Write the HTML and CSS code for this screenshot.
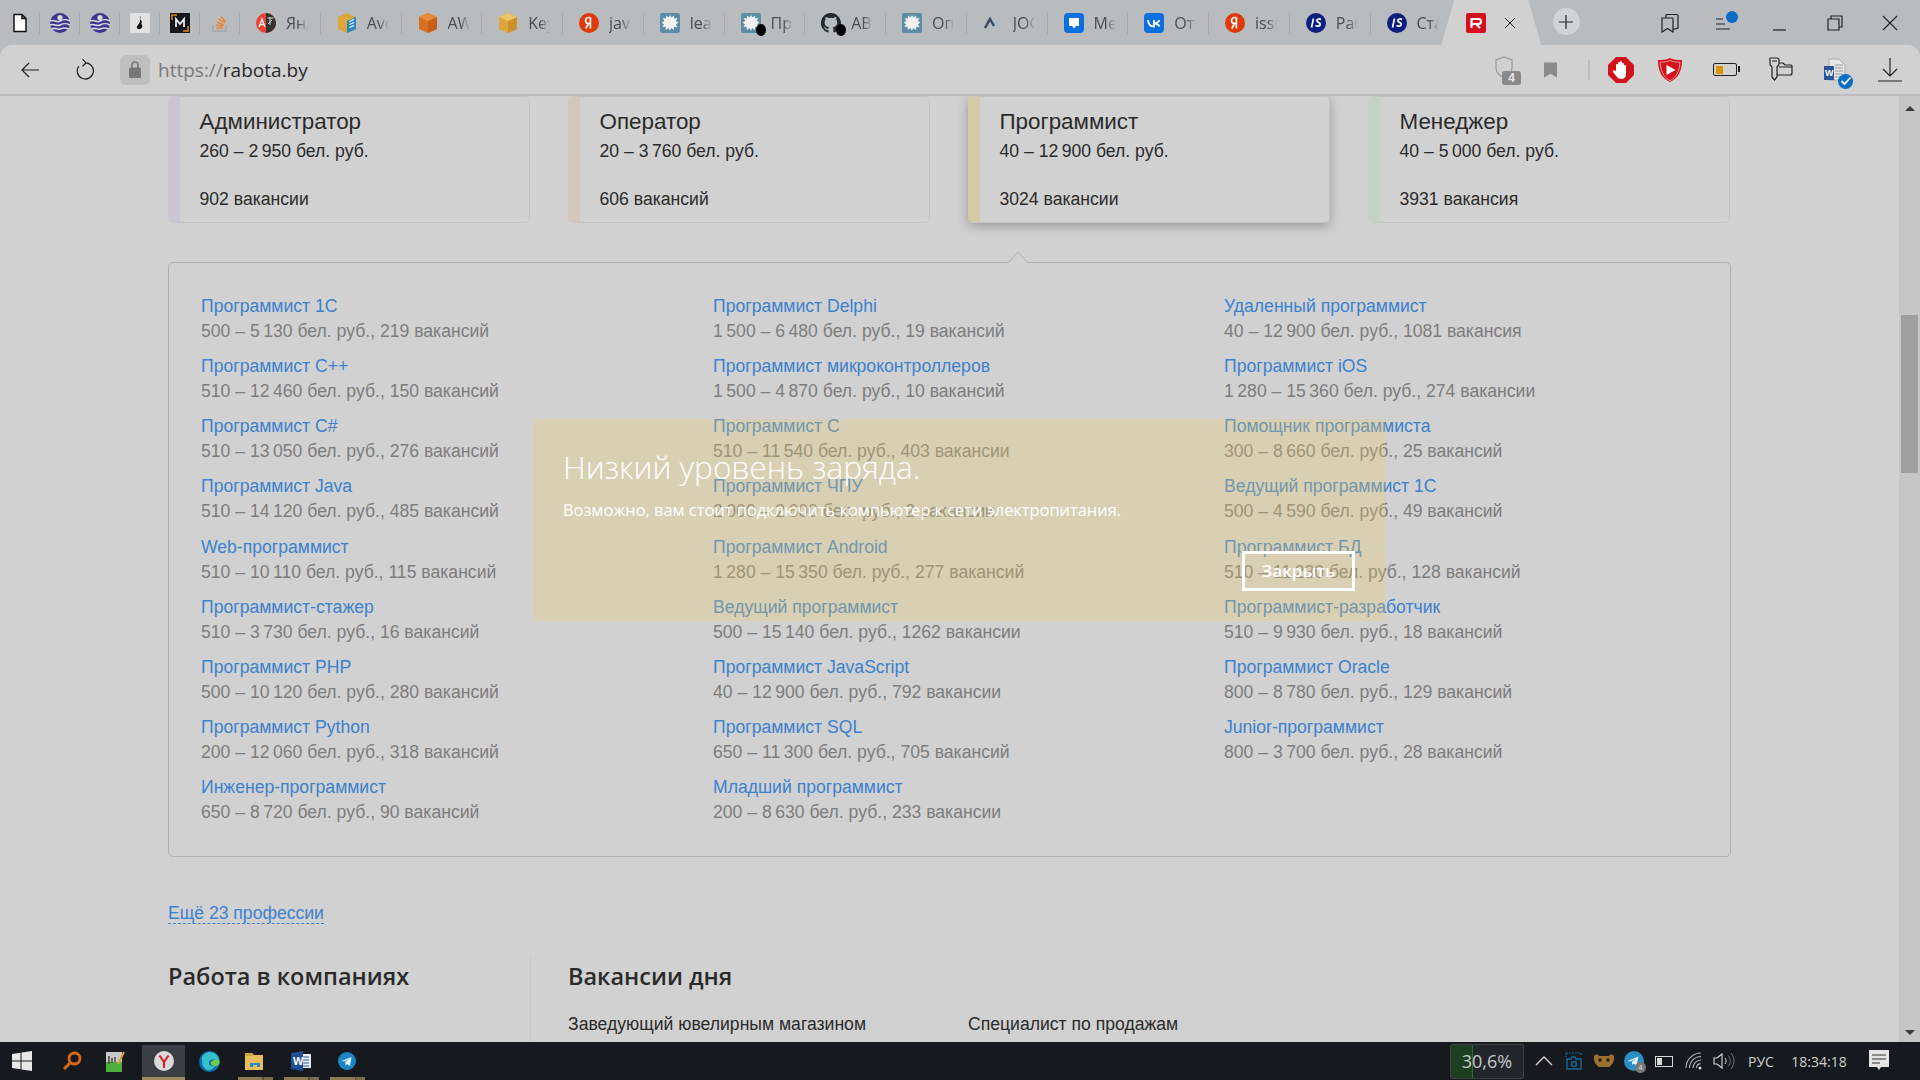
FILE: index.html
```html
<!DOCTYPE html>
<html lang="ru">
<head>
<meta charset="utf-8">
<title>rabota.by</title>
<link rel="stylesheet" href="styles.css">
</head>
<body>
<svg class="defs" width="0" height="0">
  <defs>
    <symbol id="bug" viewBox="0 0 20 20"><rect width="20" height="20" rx="2" fill="#5b8ea6"/><path d="M10 2l1.5 2.5L14 2.5l.2 3 3.3-.5-1.6 3 2.6 1.5-2.6 1.7 1.6 3-3.3-.4-.4 3.2-2.5-2-1.4 2.7-1.5-2.7-2.6 2-.2-3.2-3.2.3 1.6-2.8L1.6 9.5l2.7-1.4-1.6-3 3.2.4.3-3 2.4 2z" fill="#f2f2f2"/></symbol>
    <symbol id="wave" viewBox="0 0 20 20"><circle cx="10" cy="10" r="10" fill="#3f3590"/><circle cx="10" cy="4.5" r="2.6" fill="#d7d7dc"/><path d="M0 8c4-2 6 2 10 0s6-2 10 0M0 12c4-2 6 2 10 0s6-2 10 0M2 16c3-2 5 1 8 0s5-2 8 0" fill="none" stroke="#d7d7dc" stroke-width="1.6"/></symbol>
    <symbol id="box" viewBox="0 0 20 20"><path d="M10 0l9 4v12l-9 4-9-4V4z" fill="#dca73a"/><path d="M10 8l9-4v12l-9 4z" fill="#c9912a"/><path d="M10 8L1 4l9-4 9 4z" fill="#ecc469"/></symbol>
    <symbol id="ya" viewBox="0 0 20 20"><circle cx="10" cy="10" r="10" fill="#e0390b"/><path d="M11.4 4.5v11M11.4 10.5H9.6a3 3 0 0 1 0-6h1.8M9.5 10.5L6.8 15.5" fill="none" stroke="#fff" stroke-width="1.7"/></symbol>
    <symbol id="js" viewBox="0 0 20 20"><circle cx="10" cy="10" r="10" fill="#0b1f80"/><path d="M7.5 5.5L5.5 14.5M15 6.6c-1.2-1-4-1-4.2 1 0 2.2 3.6 1.4 3.4 3.8-.2 2-3.3 2.2-4.7 1" fill="none" stroke="#fff" stroke-width="1.7"/></symbol>
    <symbol id="x" viewBox="0 0 12 12"><path d="M1 1l10 10M11 1L1 11" stroke="currentColor" stroke-width="1" fill="none"/></symbol>
  </defs>
</svg>

<div class="screen">
  <header class="tabstrip">
    <div class="pin"><svg class="ico" viewBox="0 0 20 20"><path d="M4 1.5h8l4 4v13H4zM12 1.5v4h4" fill="#fff" stroke="#111" stroke-width="1.5"/></svg></div>
    <div class="pin"><svg class="ico"><use href="#wave"/></svg></div>
    <div class="pin"><svg class="ico"><use href="#wave"/></svg></div>
    <div class="pin"><svg class="ico" viewBox="0 0 20 20"><rect width="20" height="20" fill="#e2e2e2"/><path d="M11 3c-3 3 3 5 0 8 3 1 1 6-3 5-2-1-1-3 0-4 2-2 2-4 3-9z" fill="#111"/></svg></div>
    <div class="pin"><svg class="ico" viewBox="0 0 20 20"><rect width="20" height="20" fill="#15171b"/><path d="M2 7V2h5M18 13v5h-5" fill="none" stroke="#e8851c" stroke-width="1.5"/><path d="M6 14V6l4 5 4-5v8" fill="none" stroke="#eee" stroke-width="1.8"/></svg></div>
    <div class="pin"><svg class="ico" viewBox="0 0 20 20"><path d="M3 12v6h13v-6" fill="none" stroke="#a8a8a8" stroke-width="1.5"/><path d="M6 15h7M6.2 12l7 1.2M7 9l6.7 3M8.7 6l6 4.2M11 3.5l4.5 5.5" stroke="#e58a3c" stroke-width="1.6"/></svg></div>

    <div class="tab"><svg class="ico" viewBox="0 0 20 20"><circle cx="10" cy="10" r="10" fill="#ea4335"/><path d="M10 0a10 10 0 0 1 0 20z" fill="#333"/><path d="M3 14l3-8 3 8M4 11.5h4" stroke="#fff" fill="none" stroke-width="1.3"/><path d="M11.5 5h6M14 4v8M12 11l4-4" stroke="#ddd" fill="none"/></svg><span class="tab-name">Янд</span></div>
    <div class="tab"><svg class="ico" viewBox="0 0 20 20"><path d="M10 0l9 4v12l-9 4-9-4V4z" fill="#dca73a"/><path d="M10 8l9-4v12l-9 4z" fill="#2a87c4"/><path d="M12.5 8.5l4.5-2M12.5 11.5l4.5-2M12.5 14.5l4.5-2" stroke="#fff" stroke-width="1.2"/></svg><span class="tab-name">Avo</span></div>
    <div class="tab"><svg class="ico" viewBox="0 0 20 20"><path d="M10 0l9 4v12l-9 4-9-4V4z" fill="#d9701f"/><path d="M10 8l9-4v12l-9 4z" fill="#c75f14"/><path d="M10 8L1 4l9-4 9 4z" fill="#e88c3b"/></svg><span class="tab-name">AW</span></div>
    <div class="tab"><svg class="ico"><use href="#box"/></svg><span class="tab-name">Key</span></div>
    <div class="tab"><svg class="ico"><use href="#ya"/></svg><span class="tab-name">java</span></div>
    <div class="tab"><svg class="ico"><use href="#bug"/></svg><span class="tab-name">lea</span></div>
    <div class="tab"><span class="ico-wrap"><svg class="ico"><use href="#bug"/></svg><i class="dot"></i></span><span class="tab-name">Пр</span></div>
    <div class="tab"><span class="ico-wrap"><svg class="ico" viewBox="0 0 20 20"><path d="M10 0a10 10 0 0 0-3.2 19.5c.5.1.7-.2.7-.5v-2c-2.8.6-3.4-1.2-3.4-1.2-.5-1.2-1.1-1.5-1.1-1.5-.9-.6.1-.6.1-.6 1 .1 1.5 1 1.5 1 .9 1.5 2.3 1.1 2.9.8.1-.6.3-1.1.6-1.3-2.2-.3-4.5-1.1-4.5-4.9 0-1.1.4-2 1-2.7-.1-.3-.4-1.3.1-2.6 0 0 .8-.3 2.7 1a9.500 9.500 0 0 1 5 0c1.900-1.300 2.700-1 2.700-1 .5 1.300.2 2.300.1 2.600.6.700 1 1.600 1 2.700 0 3.800-2.300 4.600-4.500 4.900.4.300.7.900.7 1.900V19c0 .3.2.6.7.5A10 10 0 0 0 10 0z" fill="#24292e"/></svg><i class="dot"></i></span><span class="tab-name">АВ</span></div>
    <div class="tab"><svg class="ico"><use href="#bug"/></svg><span class="tab-name">Оп</span></div>
    <div class="tab"><svg class="ico" viewBox="0 0 20 20"><path d="M2 15l5-9 3.5 6 2-5 5 8" fill="none" stroke="#a9bed6" stroke-width="2.5"/><path d="M2 15l5-9 4 7" fill="none" stroke="#3a4a5a" stroke-width="2.5"/></svg><span class="tab-name">JOC</span></div>
    <div class="tab"><svg class="ico" viewBox="0 0 20 20"><rect width="20" height="20" rx="4" fill="#0b6fe0"/><path d="M5 5h10v8h-3l-2 2.5L8 13H5z" fill="#fff"/></svg><span class="tab-name">Ме</span></div>
    <div class="tab"><svg class="ico" viewBox="0 0 20 20"><rect width="20" height="20" rx="4" fill="#0b6fe0"/><path d="M4 7c.2 4 2.5 6.5 6 6.5V7M15.5 7c-.6 1.8-2.5 3-5.5 3.5 3 .3 4.8 1.3 5.5 3" fill="none" stroke="#fff" stroke-width="1.8"/></svg><span class="tab-name">Отс</span></div>
    <div class="tab"><svg class="ico"><use href="#ya"/></svg><span class="tab-name">issu</span></div>
    <div class="tab"><svg class="ico"><use href="#js"/></svg><span class="tab-name">Раб</span></div>
    <div class="tab tab-last"><svg class="ico"><use href="#js"/></svg><span class="tab-name">Ста</span></div>
    <div class="tab-active">
      <svg class="ico" viewBox="0 0 20 20"><rect width="20" height="20" rx="2" fill="#d4101f"/><path d="M5.5 15V6h7a2.3 2.3 0 0 1 0 5h-7M10 11l4 4" fill="none" stroke="#fff" stroke-width="2.2"/></svg>
      <svg class="tab-close"><use href="#x"/></svg>
    </div>
    <div class="newtab"><svg width="14" height="14" viewBox="0 0 14 14"><path d="M7 0v14M0 7h14" stroke="#222" stroke-width="1.2"/></svg></div>
    <div class="winbtns">
      <span class="win-slot"><svg class="wb" viewBox="0 0 20 20"><path d="M2 5h10a1 1 0 0 1 1 1v13l-5.500-3.500L2 19zM6 5V2.500a1 1 0 0 1 1-1h10a1 1 0 0 1 1 1V15l-5 1.500" fill="none" stroke="#222" stroke-width="1.2"/></svg></span>
      <span class="win-slot"><span class="wb-list"><svg class="wb" viewBox="0 0 20 20"><path d="M1 6h7M1 11h9M1 16h14" stroke="#222" stroke-width="1.1"/></svg><i class="bluedot"></i></span></span>
      <span class="win-slot"><svg class="wb" viewBox="0 0 20 20"><path d="M3 17h13" stroke="#222" stroke-width="1.2"/></svg></span>
      <span class="win-slot"><svg class="wb" viewBox="0 0 20 20"><path d="M6 6V3h11v11h-3M3 6h11v11H3z" fill="none" stroke="#222" stroke-width="1.2"/></svg></span>
      <span class="win-slot"><svg class="wb" viewBox="0 0 20 20"><path d="M3 3l14 14M17 3L3 17" stroke="#222" stroke-width="1.1"/></svg></span>
    </div>
  </header>

  <nav class="toolbar">
    <svg class="tool-back" viewBox="0 0 20 20"><path d="M19 10H2M9 3l-7 7 7 7" fill="none" stroke="#222" stroke-width="1.2"/></svg>
    <svg class="tool-reload" viewBox="0 0 20 24"><path d="M11 4.5a8.500 8.500 0 1 1-7 3.500M8 0.500l3.500 4L8 8" fill="none" stroke="#222" stroke-width="1.3"/></svg>
    <div class="lockbox"><svg width="12" height="17" viewBox="0 0 12 17"><path d="M3 7V4a3 3 0 0 1 6 0v3" fill="none" stroke="#777" stroke-width="1.6"/><rect y="6.5" width="12" height="10.5" rx="1.5" fill="#777"/></svg></div>
    <div class="url"><span class="url-proto">https://</span>rabota.by</div>
    <div class="tools">
      <span class="t-shield"><svg width="22" height="26" viewBox="0 0 22 26"><path d="M11 2l8 3v8c0 5-4 8-8 10-4-2-8-5-8-10V5z" fill="none" stroke="#9a9a9a" stroke-width="1.2"/></svg><b class="t-badge">4</b></span>
      <span class="slot slot-mark"><svg class="t-mark" viewBox="0 0 14 16"><path d="M0 0h14v16l-7-4-7 4z" fill="#8a8a8a"/></svg></span>
      <span class="slot slot-sep"><i class="t-sep"></i></span>
      <span class="slot slot-ad"><svg class="t-ic" viewBox="0 0 26 26"><path d="M8 0h10l8 8v10l-8 8H8l-8-8V8z" fill="#d3131c"/><path d="M8 14V8a1 1 0 0 1 2 0V6a1 1 0 0 1 2 0V5a1 1 0 0 1 2 0v2a1 1 0 0 1 2 0v2a1 1 0 0 1 2 0v8c0 3-2 5-5 5-2 0-3-1-4-2l-4-5c-.5-1 .5-2 1.5-1.500z" fill="#fff"/></svg></span>
      <span class="slot"><svg class="t-ic" viewBox="0 0 26 26"><path d="M13 1c4 2 8 2 12 2 0 10-3 18-12 22C4 21 1 13 1 3c4 0 8 0 12-2z" fill="#d3131c"/><path d="M13 3.5c3.500 1.500 6.500 1.600 9.800 1.700-.2 8-3 15-9.800 18.500C6.200 20.200 3.400 13.200 3.200 5.200 6.500 5.100 9.500 5 13 3.500z" fill="none" stroke="#f1b5b5" stroke-width=".8"/><path d="M9.500 8l9 5-9 5z" fill="#fff"/></svg></span>
      <span class="slot"><span class="t-batt"><i class="t-batt-fill"></i></span></span>
      <span class="slot"><svg class="t-ic" viewBox="0 0 26 26"><path d="M3 1h7a2 2 0 0 1 2 2v4c0 2-2 2-2 3v10l-2.500 3L5 20V10c0-1-2-1-2-3V3a2 2 0 0 1 0-2zM5 4h5" fill="none" stroke="#222" stroke-width="1.2"/><path d="M12 6h4l2 2h6a1 1 0 0 1 1 1v7a2 2 0 0 1-2 2H10M12 10h13" fill="none" stroke="#222" stroke-width="1.2"/></svg></span>
      <span class="slot"><span class="t-word"><svg width="30" height="30" viewBox="0 0 30 30"><path d="M9 4h10l6 6v15H9z" fill="#e6e6e6" stroke="#aaa"/><path d="M15 10h8M15 13h8M15 16h8M15 19h8M15 22h8" stroke="#9a9a9a"/><rect x="4" y="11" width="10" height="14" fill="#2a5699"/></svg><b class="t-word-w">W</b><i class="t-check"><svg width="12" height="10" viewBox="0 0 12 10"><path d="M1.5 5l3 3 6-6.500" fill="none" stroke="#fff" stroke-width="1.8"/></svg></i></span></span>
      <span class="slot"><svg class="t-ic" viewBox="0 0 26 26"><path d="M13 1v17M6 12l7 7 7-7M1 24h24" fill="none" stroke="#222" stroke-width="1.2"/></svg></span>
    </div>
  </nav>

  <div class="viewport">
    <main class="page">
      <section class="cards">
        <article class="card card-purple"><h3 class="card-title">Администратор</h3><p class="card-sal">260 – 2&#8201;950 бел. руб.</p><p class="card-count">902 вакансии</p></article>
        <article class="card card-peach"><h3 class="card-title">Оператор</h3><p class="card-sal">20 – 3&#8201;760 бел. руб.</p><p class="card-count">606 вакансий</p></article>
        <article class="card card-yellow card-open"><h3 class="card-title">Программист</h3><p class="card-sal">40 – 12&#8201;900 бел. руб.</p><p class="card-count">3024 вакансии</p></article>
        <article class="card card-green"><h3 class="card-title">Менеджер</h3><p class="card-sal">40 – 5&#8201;000 бел. руб.</p><p class="card-count">3931 вакансия</p></article>
      </section>

      <section class="panel">
        <svg class="panel-arrow" width="24" height="12" viewBox="0 0 24 12"><path d="M0 12h2L12 1l10 11h2" fill="#d1d1d1" stroke="#b0b0b0"/></svg>
        <div class="col">
          <div class="item"><a class="item-link">Программист 1С</a><span class="item-sal">500 – 5&#8201;130 бел. руб., 219 вакансий</span></div>
          <div class="item"><a class="item-link">Программист С++</a><span class="item-sal">510 – 12&#8201;460 бел. руб., 150 вакансий</span></div>
          <div class="item"><a class="item-link">Программист C#</a><span class="item-sal">510 – 13&#8201;050 бел. руб., 276 вакансий</span></div>
          <div class="item"><a class="item-link">Программист Java</a><span class="item-sal">510 – 14&#8201;120 бел. руб., 485 вакансий</span></div>
          <div class="item"><a class="item-link">Web-программист</a><span class="item-sal">510 – 10&#8201;110 бел. руб., 115 вакансий</span></div>
          <div class="item"><a class="item-link">Программист-стажер</a><span class="item-sal">510 – 3&#8201;730 бел. руб., 16 вакансий</span></div>
          <div class="item"><a class="item-link">Программист PHP</a><span class="item-sal">500 – 10&#8201;120 бел. руб., 280 вакансий</span></div>
          <div class="item"><a class="item-link">Программист Python</a><span class="item-sal">200 – 12&#8201;060 бел. руб., 318 вакансий</span></div>
          <div class="item"><a class="item-link">Инженер-программист</a><span class="item-sal">650 – 8&#8201;720 бел. руб., 90 вакансий</span></div>
        </div>
        <div class="col">
          <div class="item"><a class="item-link">Программист Delphi</a><span class="item-sal">1&#8201;500 – 6&#8201;480 бел. руб., 19 вакансий</span></div>
          <div class="item"><a class="item-link">Программист микроконтроллеров</a><span class="item-sal">1&#8201;500 – 4&#8201;870 бел. руб., 10 вакансий</span></div>
          <div class="item"><a class="item-link">Программист C</a><span class="item-sal">510 – 11&#8201;540 бел. руб., 403 вакансии</span></div>
          <div class="item"><a class="item-link">Программист ЧПУ</a><span class="item-sal">2&#8201;000 – 2&#8201;600 бел. руб., 2 вакансии</span></div>
          <div class="item"><a class="item-link">Программист Android</a><span class="item-sal">1&#8201;280 – 15&#8201;350 бел. руб., 277 вакансий</span></div>
          <div class="item"><a class="item-link">Ведущий программист</a><span class="item-sal">500 – 15&#8201;140 бел. руб., 1262 вакансии</span></div>
          <div class="item"><a class="item-link">Программист JavaScript</a><span class="item-sal">40 – 12&#8201;900 бел. руб., 792 вакансии</span></div>
          <div class="item"><a class="item-link">Программист SQL</a><span class="item-sal">650 – 11&#8201;300 бел. руб., 705 вакансий</span></div>
          <div class="item"><a class="item-link">Младший программист</a><span class="item-sal">200 – 8&#8201;630 бел. руб., 233 вакансии</span></div>
        </div>
        <div class="col">
          <div class="item"><a class="item-link">Удаленный программист</a><span class="item-sal">40 – 12&#8201;900 бел. руб., 1081 вакансия</span></div>
          <div class="item"><a class="item-link">Программист iOS</a><span class="item-sal">1&#8201;280 – 15&#8201;360 бел. руб., 274 вакансии</span></div>
          <div class="item"><a class="item-link">Помощник программиста</a><span class="item-sal">300 – 8&#8201;660 бел. руб., 25 вакансий</span></div>
          <div class="item"><a class="item-link">Ведущий программист 1С</a><span class="item-sal">500 – 4&#8201;590 бел. руб., 49 вакансий</span></div>
          <div class="item"><a class="item-link">Программист БД</a><span class="item-sal">510 – 11&#8201;230 бел. руб., 128 вакансий</span></div>
          <div class="item"><a class="item-link">Программист-разработчик</a><span class="item-sal">510 – 9&#8201;930 бел. руб., 18 вакансий</span></div>
          <div class="item"><a class="item-link">Программист Oracle</a><span class="item-sal">800 – 8&#8201;780 бел. руб., 129 вакансий</span></div>
          <div class="item"><a class="item-link">Junior-программист</a><span class="item-sal">800 – 3&#8201;700 бел. руб., 28 вакансий</span></div>
        </div>
      </section>

      <div class="more"><a class="more-link">Ещё 23 профессии</a></div>

      <section class="lower">
        <div class="lower-left"><h2 class="lower-h">Работа в компаниях</h2></div>
        <div class="lower-right">
          <h2 class="lower-h">Вакансии дня</h2>
          <div class="jobs"><span class="job">Заведующий ювелирным магазином</span><span class="job">Специалист по продажам</span></div>
        </div>
      </section>
    </main>
    <aside class="scrollbar">
      <i class="sb-up"></i>
      <i class="sb-thumb"></i>
      <i class="sb-down"></i>
    </aside>

    <div class="toast">
      <div class="toast-title">Низкий уровень заряда.</div>
      <div class="toast-text">Возможно, вам стоит подключить компьютер к сети электропитания.</div>
      <div class="toast-btn">Закрыть</div>
    </div>
  </div>

  <footer class="taskbar">
    <div class="tb-left">
      <span class="tb-slot tb-win"><svg width="20" height="20" viewBox="0 0 20 20"><path d="M0 3l8.5-1.2v7.700H0zM9.500 1.600L20 0v9.500H9.500zM0 10.500h8.500v7.700L0 17zM9.500 10.500H20V20L9.500 18.400z" fill="#e8e8e8"/></svg></span>
      <span class="tb-slot tb-search"><svg width="20" height="20" viewBox="0 0 20 20"><circle cx="12.5" cy="7.5" r="5.5" fill="none" stroke="#d9680f" stroke-width="2.8"/><path d="M8.5 11.5L2 18" stroke="#d9680f" stroke-width="3"/></svg></span>
      <span class="tb-slot tb-notes"><svg width="20" height="21" viewBox="0 0 20 21"><rect y="1" width="16" height="20" fill="#c8c8c8"/><rect y="11" width="16" height="10" fill="#4cae3f"/><path d="M3 5v8M6 7v5M9 6v5" stroke="#333" stroke-width="1.3"/><path d="M18 1l-6 12" stroke="#d9a22b" stroke-width="2"/></svg></span>
      <span class="tb-slot tb-active"><svg width="20" height="20" viewBox="0 0 20 20"><circle cx="10" cy="10" r="10" fill="#d9d9d9"/><path d="M5.5 4.5L10 11l4.500-6.500M10 11v6" fill="none" stroke="#d41c1c" stroke-width="2"/></svg></span>
      <span class="tb-slot"><svg width="21" height="21" viewBox="0 0 21 21"><circle cx="10.5" cy="10.5" r="10.5" fill="#0c6ab0"/><path d="M3 6a9 9 0 0 1 17 5c-4-4-9-3-10 0s3 5 6 4c-2 5-9 6-12 0-1-2-1-6-1-9z" fill="#35c1c9"/><path d="M20 9c1 2 0 5-2 6-3 1-7-1-6-4 1-2 6-3 8-2z" fill="#6cd04c"/></svg></span>
      <span class="tb-slot tb-run"><svg width="20" height="18" viewBox="0 0 20 18"><path d="M0 1h7l2 2h9v15H0z" fill="#e6be5a"/><path d="M0 1h7l2 3H0z" fill="#d8a53c"/><path d="M5 15V11h10v4h-3v-2H8v2z" fill="#2a88c9"/></svg></span>
      <span class="tb-slot tb-run"><svg width="20" height="20" viewBox="0 0 20 20"><rect x="8" y="3" width="12" height="14" fill="#e9eef6"/><path d="M11 6h7M11 9h7M11 12h7M11 15h7" stroke="#2a5699"/><path d="M0 2l12-2v20L0 18z" fill="#1f4f96"/><text class="tb-w" x="2" y="14">W</text></svg></span>
      <span class="tb-slot tb-run"><svg width="18" height="18" viewBox="0 0 18 18"><circle cx="9" cy="9" r="9" fill="#1a87c4"/><path d="M3.5 9l10-4-1.5 9-3-2-1.5 1.5V10l4-3.500-5 3z" fill="#e8f4fa"/></svg></span>
    </div>
    <div class="tb-right">
      <span class="meter"><i class="meter-fill"></i><span class="meter-val">30,6%</span></span>
      <span class="tr-slot"><svg class="tr-ic tr-chev" viewBox="0 0 18 12"><path d="M1 10l8-8 8 8" fill="none" stroke="#d8d8d8" stroke-width="1.3"/></svg></span>
      <span class="tr-slot"><svg class="tr-ic" viewBox="0 0 18 18"><path d="M1 1h15M1 1v4M16 1v3" stroke="#15689a" stroke-width="1.2" stroke-dasharray="2 1"/><path d="M2 7h4l1-2h3l1 2h5v10H2z" fill="none" stroke="#15689a" stroke-width="1.4"/><circle cx="9" cy="12" r="2.5" fill="none" stroke="#15689a" stroke-width="1.4"/></svg></span>
      <span class="tr-slot"><svg class="tr-mask" viewBox="0 0 22 14"><path d="M1 3c0-3 4-3 5-1h10c1-2 5-2 5 1 1 4-3 9-5 10H6C4 12 0 7 1 3z" fill="#9a7330"/><circle cx="7" cy="6" r="1.8" fill="#2a1c08"/><circle cx="15" cy="6" r="1.8" fill="#2a1c08"/></svg></span>
      <span class="tr-slot"><span class="tr-tg"><svg width="20" height="20" viewBox="0 0 20 20"><circle cx="10" cy="10" r="10" fill="#2b8fc6"/><path d="M3.5 10l11-4.500-2 9-3-2-1.500 1.500v-3l4-3.500-5.500 3z" fill="#e8f4fa"/></svg><i class="tr-tg-badge">4</i></span></span>
      <span class="tr-slot"><span class="tr-batt"><i class="tr-batt-fill"></i></span></span>
      <span class="tr-slot"><svg class="tr-ic" viewBox="0 0 18 18"><path d="M1 16a15 15 0 0 1 15-15M4.5 16a11.500 11.500 0 0 1 11.500-11.500M8 16a8 8 0 0 1 8-8M11.500 16a4.500 4.500 0 0 1 4-4.400" fill="none" stroke="#b5b5b5" stroke-width="1.1"/><circle cx="15" cy="16" r="1.5" fill="#d8d8d8"/></svg></span>
      <span class="tr-slot"><svg class="tr-snd" viewBox="0 0 22 18"><path d="M1 6h3l5-4v14l-5-4H1z" fill="none" stroke="#d8d8d8" stroke-width="1.1"/><path d="M12 6c1.500 2 1.500 4 0 6" fill="none" stroke="#d8d8d8"/><path d="M15 3.5c3 3.500 3 7.500 0 11M18 1c4 5 4 11 0 16" fill="none" stroke="#6d6d6d"/></svg></span>
      <span class="tr-lang">РУС</span>
      <span class="tr-time">18:34:18</span>
      <span class="tr-noteslot"><svg class="tr-note" viewBox="0 0 20 22"><path d="M0 0h20v17h-8l-2 3-2-3H0z" fill="#e4e4e4"/><path d="M3 5h14M3 9h14M3 13h8" stroke="#333"/></svg></span>
    </div>
  </footer>
</div>
</body>
</html>
```
FILE: styles.css
```css
* { box-sizing: border-box; }
html, body { margin: 0; height: 100%; overflow: hidden; }
body { font-family: "Liberation Sans", Arial, sans-serif; background: #d1d1d1; color: #2b2b2b; }
h2, h3, p { margin: 0; font-weight: normal; }
i { display: block; font-style: normal; }
.defs { position: absolute; }
.screen { width: 1920px; height: 1080px; display: flex; flex-direction: column; background: #b8bcbf; }

/* tab strip */
.tabstrip { height: 45px; flex: none; display: flex; align-items: stretch; font-family: "Open Sans", sans-serif; }
.pin { width: 40px; flex: none; display: flex; align-items: center; justify-content: center; position: relative; }
.pin::after, .tab::after { content: ""; position: absolute; right: 0; top: 13px; height: 21px; width: 1px; background: #a6aaad; }
.ico { width: 20px; height: 20px; display: block; flex: none; }
.ico-wrap { position: relative; width: 20px; height: 20px; flex: none; }
.dot { position: absolute; right: -5px; bottom: -3px; width: 10px; height: 12px; border-radius: 50%; background: #000; }
.tab { width: 80.75px; flex: none; padding-left: 16px; display: flex; align-items: center; gap: 10px; position: relative; }
.tab-last::after { display: none; }
.tab-name { font-size: 16px; color: #4c4c4c; width: 22px; overflow: hidden; white-space: nowrap; line-height: 20px; -webkit-mask-image: linear-gradient(to right, #000 55%, transparent); mask-image: linear-gradient(to right, #000 55%, transparent); }
.tab-active { width: 100px; flex: none; margin-left: -10px; background: #d1d1d1; clip-path: polygon(13px 0, 87px 0, 100px 100%, 0 100%); display: flex; align-items: center; padding-left: 25px; position: relative; z-index: 1; }
.tab-close { width: 12px; height: 12px; margin-left: 18px; color: #222; }
.newtab { width: 27px; height: 27px; flex: none; margin: 8px 0 0 11.5px; border-radius: 50%; background: #d0d4d6; display: flex; align-items: center; justify-content: center; }
.winbtns { margin-left: auto; padding-right: 2.5px; display: flex; align-items: center; }
.win-slot { width: 55px; display: flex; justify-content: center; }
.wb { width: 20px; height: 20px; display: block; }
.wb-list { position: relative; display: block; }
.bluedot { position: absolute; width: 12px; height: 12px; border-radius: 50%; background: #0a6cc4; left: 11px; top: -2px; }

/* toolbar */
.toolbar { height: 51px; flex: none; background: #d1d1d1; border-radius: 12px 12px 0 0; border-bottom: 2px solid #bcbcbc; display: flex; align-items: center; padding-left: 20px; }
.tool-back { width: 20px; height: 20px; }
.tool-reload { width: 19px; height: 24px; margin-left: 35px; }
.lockbox { width: 30px; height: 30px; background: #bfbfbf; border-radius: 6px; margin-left: 26px; display: flex; align-items: center; justify-content: center; }
.url { margin-left: 8px; font-family: "Open Sans", sans-serif; font-size: 19px; color: #2b2b2b; }
.url-proto { color: #7a7a7a; }
.tools { margin-left: auto; display: flex; align-items: center; padding-right: 2.5px; }
.slot { width: 55px; display: flex; align-items: center; justify-content: center; flex: none; }
.slot-mark { width: 58px; }
.slot-sep { width: 20px; }
.slot-ad { width: 43.5px; }
.t-shield { position: relative; width: 28px; height: 30px; display: block; }
.t-badge { position: absolute; right: 0; bottom: 0; width: 19px; height: 14px; background: #8a8a8a; color: #e8e8e8; border-radius: 3px; font: bold 12px/14px "Liberation Sans", sans-serif; text-align: center; }
.t-mark { width: 13px; height: 16px; }
.t-sep { width: 2px; height: 20px; background: #bdbdbd; }
.t-ic { width: 26px; height: 26px; display: block; }
.t-batt { width: 24px; height: 13px; border: 1.5px solid #222; border-radius: 2px; padding: 1.5px; position: relative; display: block; }
.t-batt::after { content: ""; position: absolute; right: -4px; top: 2px; width: 2px; height: 6px; background: #222; }
.t-batt-fill { width: 7px; height: 100%; background: #dc9400; }
.t-word { position: relative; width: 30px; height: 30px; display: block; }
.t-word-w { position: absolute; left: 5px; top: 12px; color: #fff; font: bold 9px/12px "Liberation Sans", sans-serif; }
.t-check { position: absolute; right: -3px; bottom: -4px; width: 15px; height: 15px; border-radius: 50%; background: #0a6cc4; display: flex; align-items: center; justify-content: center; }

/* page */
.viewport { flex: 1; min-height: 0; display: flex; position: relative; overflow: hidden; background: #d1d1d1; }
.page { flex: 1; min-width: 0; padding-left: 168px; overflow: hidden; }
.cards { width: 1563px; display: grid; grid-template-columns: repeat(4, 362px); column-gap: 38px; }
.card { height: 127px; border: 1px solid #c2c2c2; border-left: 12px solid; border-radius: 5px; padding: 10px 0 0 19.5px; position: relative; }
.card-purple { border-left-color: #cbc5d3; }
.card-peach { border-left-color: #d4c8bd; }
.card-yellow { border-left-color: #d4caa8; }
.card-green { border-left-color: #c5d2c5; }
.card-open { box-shadow: 0 3px 12px rgba(0,0,0,.28); border-color: #c4c4c4; border-left-color: #d4caa8; }
.card-title { font-size: 22.4px; line-height: 30px; color: #2b2b2b; }
.card-sal { font-size: 17.6px; line-height: 26px; margin-top: 1px; }
.card-count { font-size: 17.6px; line-height: 26px; margin-top: 22px; }
.panel { width: 1563px; height: 595px; margin-top: 39px; border: 1px solid #b0b0b0; border-radius: 5px; padding: 31px 0 0 32px; display: grid; grid-template-columns: 512px 511px 1fr; position: relative; }
.panel-arrow { position: absolute; left: 837px; top: -12px; }
.col { display: flex; flex-direction: column; }
.item { height: 60.15px; display: flex; flex-direction: column; line-height: 25px; flex: none; }
.item-link { color: #3b82cf; font-size: 17.6px; }
.item-sal { color: #7d7d7d; font-size: 17.6px; }
.more { margin-top: 46px; height: 21px; }
.more-link { color: #3b82cf; font-size: 17.6px; line-height: 20px; border-bottom: 1px dashed #3b82cf; display: inline-block; }
.lower { display: flex; margin-top: 33px; width: 1563px; }
.lower-left { width: 363px; border-right: 1px solid #c6c6c6; height: 90px; }
.lower-right { padding-left: 37px; }
.lower-h { font: 600 23.5px/38px "Open Sans", sans-serif; color: #2b2b2b; }
.jobs { display: grid; grid-template-columns: 400px auto; margin-top: 17px; font-size: 17.6px; line-height: 24px; }

/* scrollbar */
.scrollbar { width: 21px; flex: none; background: #c6c6c6; display: flex; flex-direction: column; align-items: center; }
.sb-up { width: 0; height: 0; border: 5px solid transparent; border-top: 0; border-bottom: 5px solid #3a3a3a; margin-top: 10px; }
.sb-thumb { width: 17px; height: 158px; background: #9f9f9f; margin-top: 204px; }
.sb-down { width: 0; height: 0; border: 5px solid transparent; border-bottom: 0; border-top: 5px solid #3a3a3a; margin-top: auto; margin-bottom: 7px; }

/* battery toast */
.toast { position: absolute; left: 534px; top: 323px; width: 851px; height: 202px; background: rgba(236,202,105,.3); color: #fff; font-family: "Open Sans", sans-serif; }
.toast-title { position: absolute; left: 29px; top: 27px; font-size: 31.6px; font-weight: 300; line-height: 42px; white-space: nowrap; }
.toast-text { position: absolute; left: 29px; top: 79px; font-size: 16.4px; line-height: 24px; white-space: nowrap; }
.toast-btn { position: absolute; left: 708px; top: 132px; width: 113px; height: 40px; border: 3px solid #fff; text-align: center; font-size: 17px; font-weight: 600; line-height: 34px; }

/* taskbar */
.taskbar { height: 38px; flex: none; background: #161a1e; display: flex; align-items: center; justify-content: space-between; font-family: "Open Sans", sans-serif; }
.tb-left { display: flex; height: 100%; }
.tb-slot { width: 46px; height: 35px; margin-top: 3px; padding-bottom: 3px; display: flex; align-items: center; justify-content: center; flex: none; position: relative; }
.tb-win { width: 44px; }
.tb-search { width: 55px; }
.tb-notes { width: 33px; margin-right: 10px; }
.tb-active { width: 43px; margin-right: 1px; background: #3b3f43; }
.tb-active::after { content: ""; position: absolute; left: 0; right: 0; bottom: 0; height: 3px; background: #9a8a5f; }
.tb-run::after { content: ""; position: absolute; left: 6px; right: 5px; bottom: 0; height: 3px; background: linear-gradient(to right, #8a7a52 70%, #5d5238 70%, #5d5238 73%, #7a6c49 73%); }
.tb-w { font: bold 11px "Liberation Sans", sans-serif; fill: #fff; }
.tb-right { display: flex; align-items: center; height: 100%; padding-right: 17px; }
.meter { width: 74px; height: 35px; border: 1px solid #3e4245; border-radius: 2px; position: relative; display: block; background: #22262a; margin-right: 5px; }
.meter-fill { position: absolute; left: 0; top: 0; bottom: 0; width: 22px; background: #1c3f20; border-right: 1px solid #2c6a30; }
.meter-val { position: absolute; inset: 0; text-align: center; font-size: 18px; line-height: 33px; color: #c8c8c8; }
.tr-slot { width: 30px; display: flex; align-items: center; justify-content: center; flex: none; }
.tr-ic { width: 18px; height: 18px; display: block; }
.tr-chev { height: 12px; }
.tr-mask { width: 22px; height: 14px; display: block; }
.tr-tg { position: relative; width: 20px; height: 20px; display: block; }
.tr-tg-badge { position: absolute; right: -2px; bottom: -2px; width: 11px; height: 11px; border-radius: 50%; background: #777; color: #ddd; font: 8px/11px "Liberation Sans", sans-serif; text-align: center; }
.tr-batt { width: 18px; height: 11px; border: 1.2px solid #d8d8d8; padding: 1px; display: block; }
.tr-batt-fill { width: 5px; height: 100%; background: #d8d8d8; }
.tr-snd { width: 22px; height: 18px; display: block; }
.tr-lang { font-size: 14px; color: #cfcfcf; width: 44px; text-align: center; white-space: nowrap; }
.tr-time { font-size: 14px; color: #cfcfcf; width: 72px; text-align: center; white-space: nowrap; }
.tr-noteslot { width: 48px; display: flex; justify-content: center; }
.tr-note { width: 20px; height: 22px; display: block; }
```
